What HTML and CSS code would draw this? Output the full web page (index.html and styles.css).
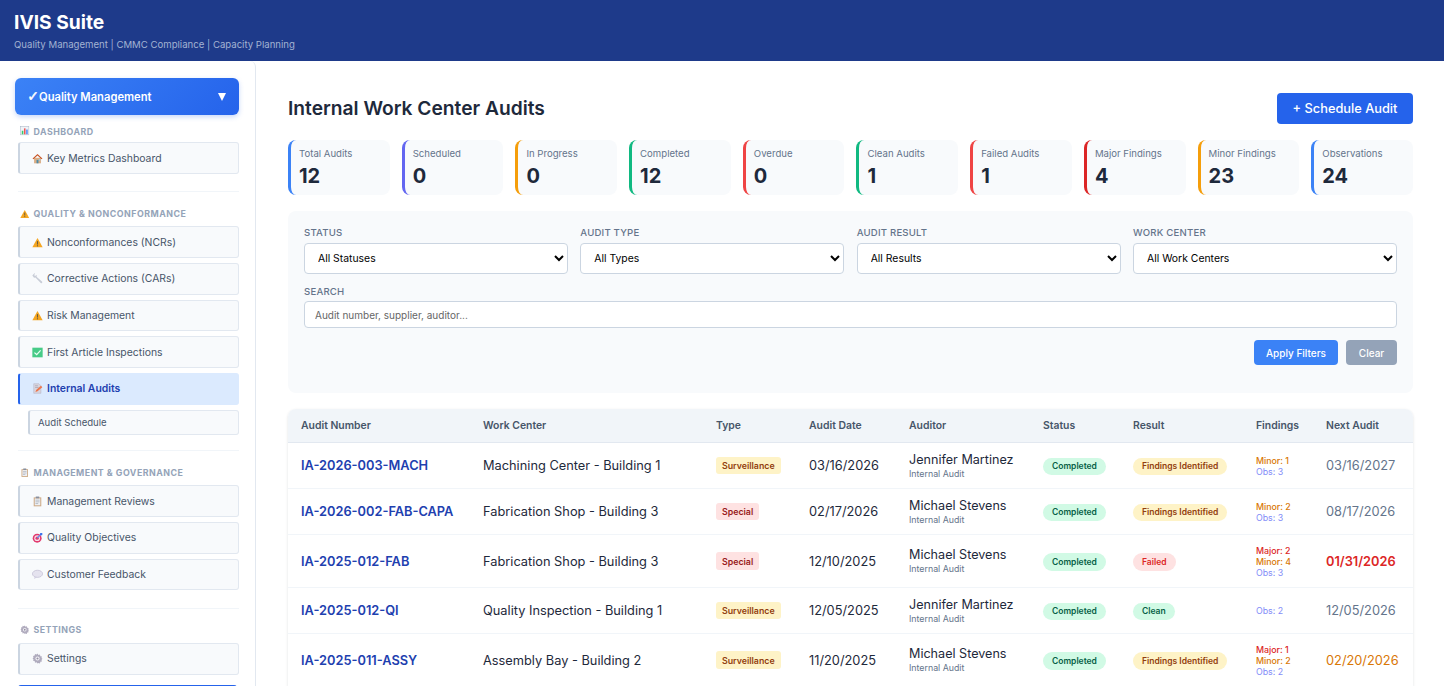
FILE: index.html
```html
<!DOCTYPE html>
<html lang="en">
<head>
<meta charset="utf-8">
<title>IVIS Suite</title>
<link rel="stylesheet" href="styles.css">
</head>
<body>
<svg class="sprite" aria-hidden="true">
  <symbol id="i-chart" viewBox="0 0 16 16"><rect x="1" y="1" width="14" height="14" fill="#eef2f7" stroke="#94a3b8" stroke-width=".8"/><rect x="3" y="8" width="2.6" height="6" fill="#22c55e"/><rect x="6.7" y="4" width="2.6" height="10" fill="#ef4444"/><rect x="10.4" y="6" width="2.6" height="8" fill="#3b82f6"/></symbol>
  <symbol id="i-house" viewBox="0 0 16 16"><rect x="3" y="7" width="10" height="8" fill="#d9a679"/><path d="M.8 8 8 1.5 15.2 8l-1.2 1L8 3.8 2 9z" fill="#c2410c"/><rect x="6.6" y="10" width="2.8" height="5" fill="#3b82a0"/><rect x="10" y="9" width="2" height="2" fill="#7dd3fc"/></symbol>
  <symbol id="i-warn" viewBox="0 0 16 16"><path d="M8 1.5 15.5 15H.5z" fill="#f59e0b"/><rect x="7.2" y="6" width="1.6" height="5" fill="#5b4a2a"/><rect x="7.2" y="12" width="1.6" height="1.6" fill="#5b4a2a"/></symbol>
  <symbol id="i-wrench" viewBox="0 0 16 16"><path d="M.5 3.500 3.500.5l1 .5-1.500 2 1.500 1.500 2-1.500.5 1-.5 1.500 8 7c1.400 1.300-.5 3.200-1.800 1.900L5 6.500l-2 .5z" fill="#c3c8d3"/></symbol>
  <symbol id="i-check" viewBox="0 0 16 16"><rect x=".5" y="1" width="15" height="14" fill="#34c77b"/><path d="M3.500 8.200 6.800 11 12.500 5" fill="none" stroke="#eafff3" stroke-width="1.800"/></symbol>
  <symbol id="i-memo" viewBox="0 0 16 16"><path d="M2.500 1H10l3 3v11H2.500z" fill="#d8d3dc" stroke="#a8a2b0" stroke-width=".6"/><path d="M4.500 4h4M4.500 6.500h5" stroke="#8f8a99" stroke-width=".8"/><path d="M5 13l1-3 7-6 2 2-7 6z" fill="#ef6a3a"/></symbol>
  <symbol id="i-clip" viewBox="0 0 16 16"><rect x="2.500" y="2" width="11" height="13" fill="#c9a27a"/><rect x="4" y="3.500" width="8" height="10" fill="#eef0f4"/><rect x="5.500" y=".8" width="5" height="2.600" fill="#7c8494"/><path d="M5 6h6M5 8.500h6M5 11h4" stroke="#8c93a3" stroke-width=".9"/></symbol>
  <symbol id="i-target" viewBox="0 0 16 16"><circle cx="7.500" cy="9" r="6.500" fill="#e0245e"/><circle cx="7.500" cy="9" r="4.200" fill="#f7dbe6"/><circle cx="7.500" cy="9" r="2.400" fill="#e0245e"/><path d="M7.500 9 14 2.500" stroke="#3b82f6" stroke-width="1.500"/><path d="M12 1.500h3v3l-2 .5-1.500-1.500z" fill="#2563eb"/></symbol>
  <symbol id="i-bubble" viewBox="0 0 16 16"><ellipse cx="8" cy="7" rx="7.400" ry="5.200" fill="#e4e1ee" stroke="#b4b0c9" stroke-width=".9"/><path d="M4 11 3 14.500 7.500 12z" fill="#cfcbe0"/></symbol>
  <symbol id="i-gear" viewBox="0 0 16 16"><path d="M8 .8l1.300 2.100 2.300-.7.500 2.400 2.400.5-.7 2.300 1.400 1-1.400 1.600.7 2.300-2.400.5-.5 2.400-2.300-.7L8 15.200l-1.300-1.700-2.300.7-.5-2.400-2.400-.5.7-2.300L.8 8l1.400-1.400-.7-2.300 2.400-.5.500-2.400 2.300.7z" fill="#a9a4b8"/><circle cx="8" cy="8" r="3" fill="#f4f3f8"/><circle cx="8" cy="8" r="1.500" fill="#8a8599"/></symbol>
</svg>

<header class="topbar">
  <h1 class="brand">IVIS Suite</h1>
  <p class="tagline">Quality Management | CMMC Compliance | Capacity Planning</p>
</header>

<div class="shell">
  <aside class="sidebar">
    <button class="module"><span><span class="tick">✓</span>Quality Management</span><span class="caret"></span></button>

    <div class="sec sec-first"><svg class="ico"><use href="#i-chart"/></svg>Dashboard</div>
    <a class="item"><svg class="ico"><use href="#i-house"/></svg>Key Metrics Dashboard</a>
    <hr class="rule">

    <div class="sec"><svg class="ico"><use href="#i-warn"/></svg>Quality &amp; Nonconformance</div>
    <a class="item"><svg class="ico"><use href="#i-warn"/></svg>Nonconformances (NCRs)</a>
    <a class="item"><svg class="ico"><use href="#i-wrench"/></svg>Corrective Actions (CARs)</a>
    <a class="item"><svg class="ico"><use href="#i-warn"/></svg>Risk Management</a>
    <a class="item"><svg class="ico"><use href="#i-check"/></svg>First Article Inspections</a>
    <a class="item active"><svg class="ico"><use href="#i-memo"/></svg>Internal Audits</a>
    <a class="item sub">Audit Schedule</a>
    <hr class="rule">

    <div class="sec"><svg class="ico"><use href="#i-clip"/></svg>Management &amp; Governance</div>
    <a class="item"><svg class="ico"><use href="#i-clip"/></svg>Management Reviews</a>
    <a class="item"><svg class="ico"><use href="#i-target"/></svg>Quality Objectives</a>
    <a class="item"><svg class="ico"><use href="#i-bubble"/></svg>Customer Feedback</a>
    <hr class="rule">

    <div class="sec"><svg class="ico"><use href="#i-gear"/></svg>Settings</div>
    <a class="item"><svg class="ico"><use href="#i-gear"/></svg>Settings</a>
    <div class="foot"></div>
  </aside>

  <main class="main">
    <div class="head">
      <h2 class="title">Internal Work Center Audits</h2>
      <button class="btn-primary">+ Schedule Audit</button>
    </div>

    <section class="stats">
      <div class="stat blue"><div class="stat-l">Total Audits</div><div class="stat-v">12</div></div>
      <div class="stat indigo"><div class="stat-l">Scheduled</div><div class="stat-v">0</div></div>
      <div class="stat amber"><div class="stat-l">In Progress</div><div class="stat-v">0</div></div>
      <div class="stat green"><div class="stat-l">Completed</div><div class="stat-v">12</div></div>
      <div class="stat red"><div class="stat-l">Overdue</div><div class="stat-v">0</div></div>
      <div class="stat green"><div class="stat-l">Clean Audits</div><div class="stat-v">1</div></div>
      <div class="stat red"><div class="stat-l">Failed Audits</div><div class="stat-v">1</div></div>
      <div class="stat red2"><div class="stat-l">Major Findings</div><div class="stat-v">4</div></div>
      <div class="stat amber"><div class="stat-l">Minor Findings</div><div class="stat-v">23</div></div>
      <div class="stat blue"><div class="stat-l">Observations</div><div class="stat-v">24</div></div>
    </section>

    <section class="filters">
      <div class="filter-row">
        <label class="field"><span class="lbl">Status</span><select class="sel"><option>All Statuses</option></select></label>
        <label class="field"><span class="lbl">Audit Type</span><select class="sel"><option>All Types</option></select></label>
        <label class="field"><span class="lbl">Audit Result</span><select class="sel"><option>All Results</option></select></label>
        <label class="field"><span class="lbl">Work Center</span><select class="sel"><option>All Work Centers</option></select></label>
      </div>
      <label class="field search"><span class="lbl">Search</span><input class="inp" placeholder="Audit number, supplier, auditor..."></label>
      <div class="actions">
        <button class="btn-apply">Apply Filters</button>
        <button class="btn-clear">Clear</button>
      </div>
    </section>

    <section class="table-card">
      <table class="tbl">
        <colgroup><col class="c1"><col class="c2"><col class="c3"><col class="c4"><col class="c5"><col class="c6"><col class="c7"><col class="c8"><col class="c9"></colgroup>
        <thead><tr><th>Audit Number</th><th>Work Center</th><th>Type</th><th>Audit Date</th><th>Auditor</th><th>Status</th><th>Result</th><th>Findings</th><th>Next Audit</th></tr></thead>
        <tbody>
          <tr class="r2">
            <td><a class="num">IA-2026-003-MACH</a></td><td>Machining Center - Building 1</td>
            <td><span class="tag tag-y">Surveillance</span></td><td>03/16/2026</td>
            <td><div class="who">Jennifer Martinez</div><div class="role">Internal Audit</div></td>
            <td><span class="pill p-g">Completed</span></td><td><span class="pill p-y">Findings Identified</span></td>
            <td><div class="f-min">Minor: 1</div><div class="f-obs">Obs: 3</div></td><td class="next">03/16/2027</td>
          </tr>
          <tr class="r2">
            <td><a class="num">IA-2026-002-FAB-CAPA</a></td><td>Fabrication Shop - Building 3</td>
            <td><span class="tag tag-r">Special</span></td><td>02/17/2026</td>
            <td><div class="who">Michael Stevens</div><div class="role">Internal Audit</div></td>
            <td><span class="pill p-g">Completed</span></td><td><span class="pill p-y">Findings Identified</span></td>
            <td><div class="f-min">Minor: 2</div><div class="f-obs">Obs: 3</div></td><td class="next">08/17/2026</td>
          </tr>
          <tr class="r3">
            <td><a class="num">IA-2025-012-FAB</a></td><td>Fabrication Shop - Building 3</td>
            <td><span class="tag tag-r">Special</span></td><td>12/10/2025</td>
            <td><div class="who">Michael Stevens</div><div class="role">Internal Audit</div></td>
            <td><span class="pill p-g">Completed</span></td><td><span class="pill p-r">Failed</span></td>
            <td><div class="f-maj">Major: 2</div><div class="f-min">Minor: 4</div><div class="f-obs">Obs: 3</div></td><td class="next overdue">01/31/2026</td>
          </tr>
          <tr class="r2">
            <td><a class="num">IA-2025-012-QI</a></td><td>Quality Inspection - Building 1</td>
            <td><span class="tag tag-y">Surveillance</span></td><td>12/05/2025</td>
            <td><div class="who">Jennifer Martinez</div><div class="role">Internal Audit</div></td>
            <td><span class="pill p-g">Completed</span></td><td><span class="pill p-g">Clean</span></td>
            <td><div class="f-obs">Obs: 2</div></td><td class="next">12/05/2026</td>
          </tr>
          <tr class="r3">
            <td><a class="num">IA-2025-011-ASSY</a></td><td>Assembly Bay - Building 2</td>
            <td><span class="tag tag-y">Surveillance</span></td><td>11/20/2025</td>
            <td><div class="who">Michael Stevens</div><div class="role">Internal Audit</div></td>
            <td><span class="pill p-g">Completed</span></td><td><span class="pill p-y">Findings Identified</span></td>
            <td><div class="f-maj">Major: 1</div><div class="f-min">Minor: 2</div><div class="f-obs">Obs: 2</div></td><td class="next soon">02/20/2026</td>
          </tr>
        </tbody>
      </table>
    </section>
  </main>
</div>
</body>
</html>
```
FILE: styles.css
```css
* { box-sizing: border-box; }
html, body { height: 100%; margin: 0; overflow: hidden; }
body { display: flex; flex-direction: column; font-family: Inter, "Liberation Sans", sans-serif; background: #f1f5f9; color: #1e293b; }
.sprite { display: none; }

.topbar { height: 61px; flex: none; background: #1e3a8a; padding: 11px 14px 0; }
.brand { margin: 0; font-size: 19.200px; line-height: 23px; font-weight: 700; color: #fff; }
.tagline { margin: 4px 0 0; font-size: 9.600px; line-height: 13px; color: #a3b3d3; }

.shell { flex: 1; display: flex; min-height: 0; background: #fff; }

.sidebar { width: 256px; flex: none; height: 640px; padding: 17px 16px 0 15px; background: #fff; border-right: 1px solid #e2e8f0; border-top-right-radius: 6px; overflow: hidden; display: flex; flex-direction: column; }
.module { flex: none; height: 37px; display: flex; align-items: center; justify-content: space-between; padding: 0 13px 0 12px; border: 0; border-radius: 6px; background: linear-gradient(135deg, #3b82f6, #2563eb); box-shadow: 0 2px 5px rgba(37, 99, 235, .25); color: #fff; font: 600 11.200px Inter, sans-serif; }
.tick { display: inline-block; width: 12px; font-family: "DejaVu Sans", sans-serif; font-size: 14px; line-height: 12px; -webkit-text-stroke: .4px #fff; }
.caret { width: 0; height: 0; border-left: 4.500px solid transparent; border-right: 4.500px solid transparent; border-top: 8px solid #fff; }

.sec { flex: none; display: flex; align-items: center; height: 12px; margin: 0 0 7px 5px; color: #94a3b8; font-size: 8.800px; font-weight: 700; letter-spacing: .5px; text-transform: uppercase; }
.sec-first { margin-top: 10px; margin-bottom: 5.200px; }
.sec .ico { margin-right: 4px; width: 9.500px; height: 9.500px; }

.item { flex: none; display: flex; align-items: center; height: 31.700px; margin: 0 0 5px 3px; padding-left: 11.500px; background: #f8fafc; border: 1px solid #e2e8f0; border-left: 2px solid #cbd5e1; border-radius: 3px; color: #475569; font-size: 10.400px; }
.ico { width: 11px; height: 11px; margin-right: 4.500px; flex: none; opacity: .9; }
.item.active { background: #dbeafe; border-color: #dbeafe; border-left-color: #2563eb; color: #1e40af; font-weight: 600; }
.item.sub { height: 25px; margin-left: 13px; margin-bottom: 3px; padding-left: 8px; font-size: 9.600px; }

.rule { flex: none; width: 221px; margin: 12.400px 0 15.100px 3px; border: 0; border-top: 1px solid #f1f5f9; }
.foot { flex: none; width: 219px; height: 20px; margin: 5.500px 0 0 3px; background: #f8fafc; border-top: 2px solid #2563eb; border-radius: 3px 3px 0 0; }

.main { flex: 1; min-width: 0; padding: 32px 31px 0 32px; overflow: hidden; }
.head { display: flex; align-items: center; justify-content: space-between; height: 31px; margin-bottom: 16px; }
.title { margin: -1px 0 0; font-size: 19.200px; font-weight: 600; color: #1e293b; }
.btn-primary { width: 136px; height: 31px; border: 0; border-radius: 4px; background: #2563eb; color: #fff; font: 500 12.800px Inter, sans-serif; }

.stats { display: grid; grid-template-columns: repeat(10, 1fr); gap: 12px; margin-bottom: 16px; }
.stat { height: 55px; padding: 8px 8px 0 8px; background: #f8fafc; border-left: 3px solid; border-radius: 8px; }
.stat-l { font-size: 9.600px; line-height: 12px; color: #64748b; }
.stat-v { font-size: 20px; line-height: 24px; font-weight: 700; color: #1e293b; margin-top: 4px; }
.blue { border-color: #3b82f6; } .indigo { border-color: #6366f1; } .amber { border-color: #f59e0b; }
.green { border-color: #10b981; } .red { border-color: #ef4444; } .red2 { border-color: #dc2626; }

.filters { height: 182px; margin-bottom: 16px; padding: 16px; background: #f8fafc; border-radius: 8px; }
.filter-row { display: grid; grid-template-columns: repeat(4, 1fr); gap: 12.400px; margin-bottom: 12px; }
.field { display: block; }
.lbl { display: block; height: 12px; margin-bottom: 4px; font-size: 9.600px; line-height: 12px; font-weight: 500; letter-spacing: .2px; text-transform: uppercase; color: #64748b; }
.sel { display: block; width: 100%; height: 31px; padding: 0 9px; background: #fff; border: 1px solid #cbd5e1; border-radius: 4px; font: 400 10.400px Inter, sans-serif; color: #000; }
.search .lbl { margin-bottom: 3px; }
.inp { display: block; width: 100%; height: 27px; padding: 0 10px; background: #fff; border: 1px solid #cbd5e1; border-radius: 4px; font: 400 10px Inter, sans-serif; color: #1e293b; }
.inp::placeholder { color: #666; opacity: 1; }
.actions { display: flex; justify-content: flex-end; gap: 8px; margin-top: 12px; }
.btn-apply, .btn-clear { height: 25px; border: 0; border-radius: 4px; color: #fff; font: 500 10px Inter, sans-serif; }
.btn-apply { width: 84px; background: #3b82f6; }
.btn-clear { width: 51px; background: #94a3b8; }

.table-card { background: #fff; border-radius: 8px 8px 0 0; box-shadow: 0 1px 3px rgba(15, 23, 42, .12); overflow: hidden; }
.tbl { width: 100%; border-collapse: collapse; table-layout: fixed; font-size: 12.800px; }
.c1 { width: 182px; } .c2 { width: 233px; } .c3 { width: 93px; } .c4 { width: 100px; } .c5 { width: 134px; }
.c6 { width: 90px; } .c7 { width: 123px; } .c8 { width: 70px; } .c9 { width: 100px; }
th { height: 33.500px; padding: 0 0 0 13px; background: #f1f5f9; border-bottom: 1px solid #e2e8f0; text-align: left; font-size: 10.400px; font-weight: 600; color: #475569; }
td { padding: 0 0 0 13px; border-bottom: 1px solid #f1f5f9; vertical-align: middle; white-space: nowrap; }
.r2 td { height: 46px; }
.r3 td { height: 53px; }
.num { color: #1e40af; font-weight: 600; }
.who { font-size: 12.600px; line-height: 14.500px; margin-bottom: .5px; color: #1e293b; }
.role { font-size: 8.800px; line-height: 11px; color: #64748b; }
.tag, .pill { display: inline-block; line-height: 11px; font-weight: 600; }
.tag { padding: 3.250px 6px; border-radius: 3px; font-size: 8.800px; }
.pill { padding: 3.250px 9px; border-radius: 10px; font-size: 8.500px; vertical-align: -1.500px; }
.tag-y { background: #fef3c7; color: #92400e; }
.tag-r { background: #fee2e2; color: #991b1b; }
.p-g { background: #d1fae5; color: #065f46; }
.p-y { background: #fef3c7; color: #92400e; }
.p-r { background: #fee2e2; color: #dc2626; }
.f-maj, .f-min, .f-obs { font-size: 8.800px; line-height: 11px; }
.f-maj { color: #dc2626; font-weight: 500; }
.f-min { color: #d97706; font-weight: 500; }
.f-obs { color: #818cf8; }
.next { color: #64748b; }
.overdue { color: #dc2626; font-weight: 600; }
.soon { color: #d97706; }
```
